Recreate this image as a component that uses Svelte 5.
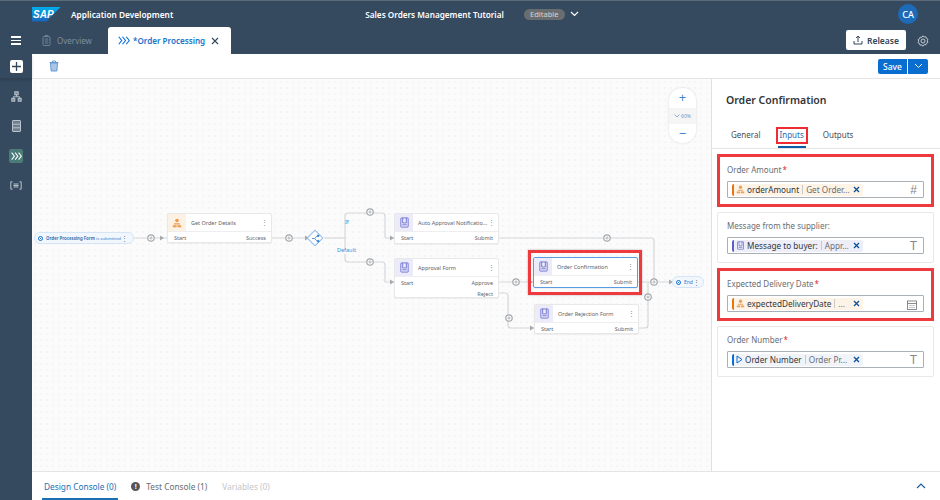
<script>
  const nodes = [
    { name: "Get Order Details", x: 167, y: 213, h: 30, kind: "person", outs: ["Success"] },
    { name: "Auto Approval Notificatio...", x: 394, y: 213, h: 31, kind: "form", outs: ["Submit"] },
    { name: "Approval Form", x: 394, y: 258, h: 40, kind: "form", outs: ["Approve", "Reject"] },
    { name: "Order Confirmation", x: 533, y: 257, h: 31, kind: "form", outs: ["Submit"], selected: true },
    { name: "Order Rejection Form", x: 534, y: 304, h: 30, kind: "form", outs: ["Submit"] }
  ];

  const plusDots = [[151, 238], [289, 238], [370, 212], [370, 262], [516, 282], [607, 238], [654, 282], [648, 297], [509, 318]];
  const arrows = [[160, 238], [305, 238], [390, 238], [390, 282], [529, 282], [530, 328], [669, 282]];

  const inputs = [
    { label: "Order Amount", req: true, hot: true, tone: "orange", icon: "person", main: "orderAmount", sub: "Get Order...", type: "#" },
    { label: "Message from the supplier:", tone: "violet", icon: "form", main: "Message to buyer:", sub: "Appr...", type: "T" },
    { label: "Expected Delivery Date", req: true, hot: true, tone: "orange", icon: "person", main: "expectedDeliveryDate", sub: "...", type: "cal" },
    { label: "Order Number", req: true, tone: "blue", icon: "play", main: "Order Number", sub: "Order Pr...", type: "T" }
  ];
</script>

{#snippet chevrons(size, color)}
  <svg width={size} height={size * 0.75} viewBox="0 0 16 12" fill="none" stroke={color} stroke-width="1.5">
    <path d="M1 1l4 5-4 5M6 1l4 5-4 5M11 1l4 5-4 5" />
  </svg>
{/snippet}

{#snippet formIcon(size, color)}
  <svg width={size} height={size} viewBox="0 0 12 12" fill="none" stroke={color} stroke-width="1">
    <rect x="2" y="1" width="8" height="10" rx=".5" />
    <path d="M4 1v5.500h4V1M3.500 8.500h5" />
  </svg>
{/snippet}

{#snippet personIcon(size, color)}
  <svg width={size} height={size} viewBox="0 0 12 12" fill={color}>
    <circle cx="6" cy="3" r="2.200" />
    <path d="M2.500 6.300h7v1.500h-7zM1 8.600h4.500V11H1zM6.500 8.600H11V11H6.500z" />
  </svg>
{/snippet}

<div class="page">
  <header class="shell">
    <div class="top">
      <div class="brand">
        <span class="logo">SAP</span>
        <span class="app">Application Development</span>
      </div>
      <div class="project">
        <span class="project-name">Sales Orders Management Tutorial</span>
        <span class="badge">Editable</span>
        <svg width="9" height="6" viewBox="0 0 9 6" fill="none" stroke="#fff" stroke-width="1.200"><path d="M1 1l3.500 3.500L8 1" /></svg>
      </div>
      <div class="account"><span class="avatar">CA</span></div>
    </div>
    <div class="tabs">
      <div class="burger"><i></i><i></i><i></i></div>
      <div class="tab">
        <svg width="9" height="11" viewBox="0 0 9 11" fill="none" stroke="#6f8296" stroke-width="1"><rect x="1" y="1.500" width="7" height="9" rx="1" /><path d="M3 1.500V.6h3v.9M2.800 4h3.400M2.800 6h3.400M2.800 8h3.400" /></svg>
        Overview
      </div>
      <div class="tab active">
        {@render chevrons(12, "#0a6ed1")}
        <span>*Order Processing</span>
        <svg width="8" height="8" viewBox="0 0 8 8" stroke="#32465a" stroke-width="1.100"><path d="M1 1l6 6M7 1L1 7" /></svg>
      </div>
      <button class="release">
        <svg width="10" height="10" viewBox="0 0 10 10" fill="none" stroke="#32465a" stroke-width="1"><path d="M1 6v3h8V6M5 7V1M3 3l2-2 2 2" /></svg>
        Release
      </button>
      <svg class="gear" width="12" height="12" viewBox="0 0 12 12" fill="none" stroke="#c3ccd5" stroke-width="1">
        <path d="M6 .8l1.200 1.200 1.700-.2.5 1.600 1.500.8-.6 1.600.6 1.600-1.500.8-.5 1.600-1.700-.2L6 11.200 4.800 10l-1.700.2-.5-1.600-1.500-.8.6-1.600-.6-1.600 1.500-.8.5-1.600 1.700.2z" />
        <circle cx="6" cy="6" r="2" />
      </svg>
    </div>
  </header>

  <div class="work">
    <nav class="rail">
      <div class="rail-add"><span class="add">
        <svg width="9" height="9" viewBox="0 0 9 9" stroke="#32465a" stroke-width="1.300"><path d="M4.500 0v9M0 4.500h9" /></svg>
      </span></div>
      <div class="rail-item">
        <svg width="11" height="11" viewBox="0 0 11 11" fill="#7e8c9a" stroke="#b8c2cc" stroke-width="1"><rect x="3.800" y=".8" width="3.400" height="3" /><rect x=".8" y="7.400" width="3" height="2.800" /><rect x="7.200" y="7.400" width="3" height="2.800" /><path d="M5.500 3.800v2H2.300v1.600M5.500 5.800h3.200v1.600" fill="none" /></svg>
      </div>
      <div class="rail-item">
        <svg width="9" height="12" viewBox="0 0 9 12" fill="#6f7f8f" stroke="#b8c2cc" stroke-width="1"><rect x=".5" y=".5" width="8" height="11" rx=".5" /><path d="M.5 4.200h8M.5 7.800h8" /></svg>
      </div>
      <div class="rail-item">
        <span class="rail-on">{@render chevrons(11, "#fff")}</span>
      </div>
      <div class="rail-item">
        <svg width="12" height="9" viewBox="0 0 12 9" fill="none" stroke="#b8c2cc" stroke-width="1"><path d="M2.500.8H.8v7.400h1.700M9.500.8h1.700v7.400H9.500M3.500 3h5M3.500 4.500h5M3.500 6h5" /></svg>
      </div>
    </nav>

    <div class="content">
      <div class="toolbar">
        <svg class="trash" width="10" height="12" viewBox="0 0 10 12" fill="#a9c6e6" stroke="#5b93cf" stroke-width=".9">
          <path d="M1.500 3h7l-.6 8H2.100z" />
          <path d="M.5 2.500h9M3.500 2.300V1h3v1.300" fill="none" />
        </svg>
        <div class="save">
          <span class="save-main">Save</span>
          <span class="save-more">
            <svg width="9" height="6" viewBox="0 0 9 6" fill="none" stroke="#fff" stroke-width="1"><path d="M1 1l3.500 3.500L8 1" /></svg>
          </span>
        </div>
      </div>

      <div class="middle">
        <div class="canvas">
          <svg class="wires" width="679" height="392" viewBox="32 79 679 392" fill="none" stroke="#d4d7da" stroke-width="1.200">
            <path d="M133 238H167M272 238H306" />
            <path d="M324 238H345" />
            <path d="M385 238V216q0-3-3-3H348q-3 0-3 3V259q0 3 3 3H382q3 0 3 3V282H394M385 238H394" />
            <path d="M498 238H651q3 0 3 3V282M498 282H533M498 293H505q3 0 3 3V325q0 3 3 3H534" />
            <path d="M637 282H672M638 328H645q3 0 3-3V282" />
            {#each arrows as [ax, ay]}
              <path d="M{ax} {ay - 2.500}l4 2.500-4 2.500z" fill="#a6aaae" stroke="none" />
            {/each}
            {#each plusDots as [px, py]}
              <circle cx={px} cy={py} r="3.200" fill="#fff" stroke="#a3a7ab" stroke-width="1.200" />
              <path d="M{px - 1.700} {py}h3.400M{px} {py - 1.700}v3.400" stroke="#a3a7ab" stroke-width=".8" />
            {/each}
          </svg>

          <div class="pill start">
            <span class="radio"></span>
            <b>Order Processing Form</b>&nbsp;is submitted
            <span class="pill-dots">⋮</span>
          </div>

          <span class="gate">
            <svg width="9" height="9" viewBox="0 0 10 10" fill="none" stroke="#2f7fd0" stroke-width=".9"><path d="M1 5h3l3-3M4 5l3 3" /><circle cx="8" cy="2" r="1" fill="#2f7fd0" /><circle cx="8" cy="8" r="1" fill="#2f7fd0" /></svg>
          </span>
          <span class="branch if">If</span>
          <span class="branch default">Default</span>

          {#each nodes as n}
            <div class="node" class:selected={n.selected} style="left: {n.x - 32}px; top: {n.y - 79}px; height: {n.h}px;">
              <div class="node-head">
                <span class="node-icon {n.kind}">
                  {#if n.kind === "person"}
                    {@render personIcon(10, "#ec9a4d")}
                  {:else}
                    {@render formIcon(11, "#6f71cf")}
                  {/if}
                </span>
                <span class="node-name">{n.name}</span>
                <span class="node-dots">⋮</span>
              </div>
              <div class="node-ports">
                <span>Start</span>
                <span class="outs">
                  {#each n.outs as o}<span>{o}</span>{/each}
                </span>
              </div>
            </div>
          {/each}

          <div class="hot-node"></div>

          <div class="pill end">
            <span class="radio"></span>
            End
            <span class="pill-dots">⋮</span>
          </div>

          <div class="zoom">
            <span class="zoom-btn">+</span>
            <span class="zoom-val">
              <svg width="6" height="4" viewBox="0 0 6 4" fill="none" stroke="#6b9bd0" stroke-width=".8"><path d="M.5.500L3 3 5.500.500" /></svg>
              60%
            </span>
            <span class="zoom-btn">−</span>
          </div>
        </div>

        <aside class="panel">
          <h2>Order Confirmation</h2>
          <div class="panel-tabs">
            <span>General</span>
            <span class="on">Inputs</span>
            <span>Outputs</span>
          </div>
          <div class="cards">
            {#each inputs as f}
              <div class="card" class:hot={f.hot}>
                <div class="field-label">{f.label}{#if f.req}<span class="req">*</span>{/if}</div>
                <div class="field">
                  <span class="token {f.tone}">
                    {#if f.icon === "person"}
                      {@render personIcon(9, "#e8a25f")}
                    {:else if f.icon === "form"}
                      {@render formIcon(9, "#6f71cf")}
                    {:else}
                      <svg width="7" height="9" viewBox="0 0 7 9" fill="none" stroke="#0a6ed1" stroke-width="1"><path d="M1 1l5 3.500-5 3.500z" /></svg>
                    {/if}
                    <span class="main">{f.main}</span>
                    <span class="sub">{f.sub}</span>
                    <svg class="x" width="7" height="7" viewBox="0 0 7 7" stroke="#0a4f9c" stroke-width="1.300"><path d="M1 1l5 5M6 1L1 6" /></svg>
                  </span>
                  <span class="type">
                    {#if f.type === "cal"}
                      <svg width="10" height="10" viewBox="0 0 10 10" fill="none" stroke="#6a6d70" stroke-width=".8"><rect x=".5" y="1" width="9" height="8.500" /><path d="M.5 3.500h9M2.500 5.500h1M4.500 5.500h1M6.500 5.500h1M2.500 7.500h1M4.500 7.500h1M6.500 7.500h1" /></svg>
                    {:else}
                      {f.type}
                    {/if}
                  </span>
                </div>
              </div>
            {/each}
          </div>
        </aside>
      </div>

      <footer class="console">
        <span class="con on">Design Console (0)</span>
        <span class="con">
          <span class="alert">!</span>
          Test Console (1)
        </span>
        <span class="con off">Variables (0)</span>
        <svg class="up" width="10" height="6" viewBox="0 0 10 6" fill="none" stroke="#1a5c9e" stroke-width="1.200"><path d="M1 5l4-4 4 4" /></svg>
      </footer>
    </div>
  </div>
</div>

<style>
  :global(body) {
    margin: 0;
    font-family: "Noto Sans", "Open Sans", sans-serif;
    color: #32363a;
  }

  .page {
    width: 940px;
    height: 500px;
    display: flex;
    flex-direction: column;
    overflow: hidden;
  }

  /* header */
  .shell {
    background: #354a5f;
    border-top: 1px solid #5b6b7b;
    height: 53px;
    flex: none;
  }
  .top {
    height: 26px;
    display: grid;
    grid-template-columns: 1fr auto 1fr;
    align-items: center;
  }
  .brand {
    display: flex;
    align-items: center;
    gap: 10px;
    padding-left: 32px;
  }
  .logo {
    width: 29px;
    height: 15px;
    background: linear-gradient(180deg, #00aeef, #1b62b8);
    clip-path: polygon(0 0, 100% 0, 50% 100%, 0 100%);
    color: #fff;
    font: italic bold 10px/15px "Liberation Sans", sans-serif;
    padding-left: 1px;
    box-sizing: border-box;
  }
  .app {
    color: #fff;
    font-size: 8.300px;
    font-weight: 600;
  }
  .project {
    display: flex;
    align-items: center;
    color: #fff;
    font-size: 8.200px;
    font-weight: 600;
    padding-left: 4px;
  }
  .badge {
    margin-left: 20px;
    margin-right: 5px;
    background: #6a6d70;
    color: #d5d7d9;
    font-size: 7.500px;
    font-weight: 400;
    height: 11px;
    line-height: 11px;
    width: 41px;
    text-align: center;
    border-radius: 6px;
  }
  .account {
    display: flex;
    justify-content: flex-end;
    padding-right: 22px;
  }
  .avatar {
    width: 20px;
    height: 20px;
    border-radius: 50%;
    background: #1d6bb8;
    color: #fff;
    font-size: 9px;
    font-weight: 500;
    display: flex;
    align-items: center;
    justify-content: center;
  }
  .tabs {
    height: 27px;
    display: flex;
    align-items: stretch;
    font-size: 8px;
  }
  .burger {
    width: 32px;
    display: flex;
    flex-direction: column;
    justify-content: center;
    align-items: center;
    gap: 2px;
  }
  .burger i {
    width: 10px;
    height: 1.500px;
    background: #fff;
  }
  .tab {
    width: 76px;
    display: flex;
    align-items: center;
    gap: 6px;
    padding-left: 10px;
    box-sizing: border-box;
    color: #7d8e9f;
  }
  .tab.active {
    width: 123px;
    background: #fff;
    border-radius: 3px 3px 0 0;
    color: #1a73c9;
    font-weight: 600;
    font-size: 8.100px;
    gap: 4px;
  }
  .tab.active span {
    width: 74px;
    margin-left: -1px;
    white-space: nowrap;
  }
  .release {
    margin: 3px 0 4px auto;
    width: 60px;
    height: 20px;
    background: #fff;
    border: 0;
    border-radius: 2px;
    display: flex;
    align-items: center;
    justify-content: center;
    gap: 4px;
    font: 600 8.500px "Noto Sans", sans-serif;
    color: #32465a;
    padding: 0;
  }
  .gear {
    margin: 8px 11px 0 11px;
  }

  /* left rail */
  .work {
    flex: 1;
    display: flex;
    min-height: 0;
  }
  .rail {
    width: 32px;
    flex: none;
    background: #354a5f;
    display: flex;
    flex-direction: column;
  }
  .rail-add {
    height: 24px;
    display: flex;
    align-items: center;
    justify-content: center;
    box-shadow: 0 2px 3px rgba(0, 0, 0, 0.15);
    margin-bottom: 4px;
  }
  .add {
    width: 13px;
    height: 13px;
    background: #fff;
    border-radius: 2px;
    display: flex;
    align-items: center;
    justify-content: center;
  }
  .rail-item {
    height: 29.500px;
    display: flex;
    align-items: center;
    justify-content: center;
  }
  .rail-on {
    width: 14px;
    height: 14px;
    border-radius: 2px;
    background: #4a7c78;
    display: flex;
    align-items: center;
    justify-content: center;
  }

  /* main */
  .content {
    flex: 1;
    display: flex;
    flex-direction: column;
    min-width: 0;
  }
  .toolbar {
    height: 24px;
    flex: none;
    display: flex;
    align-items: center;
    justify-content: space-between;
    padding: 0 12px 0 17px;
    border-bottom: 1px solid #e4e4e4;
  }
  .save {
    display: flex;
    height: 15px;
    gap: 1px;
    color: #fff;
    font-size: 8.500px;
    font-weight: 500;
  }
  .save-main,
  .save-more {
    background: #0a6ed1;
    display: flex;
    align-items: center;
    justify-content: center;
  }
  .save-main {
    width: 29px;
    border-radius: 2px 0 0 2px;
  }
  .save-more {
    width: 20px;
    border-radius: 0 2px 2px 0;
  }
  .middle {
    flex: 1;
    display: flex;
    min-height: 0;
  }

  /* canvas */
  .canvas {
    position: relative;
    flex: 1;
    background-color: #fbfbfb;
    background-image: radial-gradient(#ededed 0.6px, transparent 0.8px);
    background-size: 6px 6px;
    font-size: 5.500px;
    overflow: hidden;
  }
  .wires {
    position: absolute;
    left: 0;
    top: 0;
  }
  .pill {
    position: absolute;
    height: 12px;
    box-sizing: border-box;
    display: flex;
    align-items: center;
    background: #f1f7fd;
    border: 1px solid #d5e5f5;
    border-radius: 6px;
    color: #2f7fd0;
    font-size: 4.300px;
    padding: 0 3px;
    white-space: nowrap;
  }
  .pill b {
    font-weight: 700;
    color: #3a76b5;
  }
  .start {
    left: 2px;
    top: 153px;
    width: 100px;
  }
  .start .pill-dots {
    margin-right: 3px;
  }
  .end {
    left: 640px;
    top: 197px;
    width: 32px;
    font-size: 5px;
  }
  .radio {
    width: 5px;
    height: 5px;
    border: 0.8px solid #0a6ed1;
    border-radius: 50%;
    box-sizing: border-box;
    margin-right: 3px;
    background: radial-gradient(#0a6ed1 40%, #fff 45%);
    flex: none;
  }
  .pill-dots {
    margin-left: auto;
    color: #6a6d70;
    font-size: 7px;
  }
  .gate {
    position: absolute;
    left: 274px;
    top: 150px;
    width: 18px;
    height: 18px;
    display: flex;
    align-items: center;
    justify-content: center;
  }
  .gate::before {
    content: "";
    position: absolute;
    inset: 3px;
    background: #fff;
    border: 1px solid #8dbcec;
    border-radius: 1px;
    transform: rotate(45deg);
  }
  .gate svg {
    position: relative;
  }
  .branch {
    position: absolute;
    color: #3c8ad8;
    font-size: 5.500px;
    line-height: 1;
  }
  .if {
    left: 313px;
    top: 141px;
  }
  .default {
    left: 305px;
    top: 169px;
    background: #fbfbfb;
  }
  .node {
    position: absolute;
    width: 105px;
    box-sizing: border-box;
    background: #fff;
    border: 1px solid #e8e8e8;
    border-radius: 2px;
    box-shadow: 0 1px 1px rgba(0, 0, 0, 0.05);
    color: #5f6367;
  }
  .node.selected {
    border-color: #5a9ce0;
  }
  .node-head {
    height: 18px;
    display: flex;
    align-items: center;
    border-bottom: 1px solid #eee;
    box-sizing: border-box;
  }
  .node-icon {
    width: 18px;
    height: 100%;
    display: flex;
    align-items: center;
    justify-content: center;
    background: #ecebfa;
  }
  .node-icon.person {
    background: #fdf1e4;
  }
  .node-name {
    margin-left: 5px;
    flex: 1;
    white-space: nowrap;
  }
  .node-dots {
    margin-right: 3px;
    font-size: 7px;
    color: #80868b;
  }
  .node-ports {
    display: flex;
    justify-content: space-between;
    padding: 1px 5px 0 6px;
    line-height: 11px;
  }
  .outs {
    display: flex;
    flex-direction: column;
    align-items: flex-end;
  }
  .hot-node {
    position: absolute;
    left: 496px;
    top: 171px;
    width: 114px;
    height: 45px;
    box-sizing: border-box;
    border: 3px solid #ee3a3f;
    box-shadow: 0 0 2px rgba(0, 0, 0, 0.3);
  }
  .zoom {
    position: absolute;
    left: 637px;
    top: 9px;
    width: 27px;
    height: 55px;
    background: #fff;
    border-radius: 13px;
    box-shadow: 0 0 3px rgba(0, 0, 0, 0.12);
    display: flex;
    flex-direction: column;
    color: #3f87d4;
  }
  .zoom-btn {
    flex: 1;
    display: flex;
    align-items: center;
    justify-content: center;
    font-size: 13px;
    line-height: 1;
  }
  .zoom-val {
    height: 16px;
    flex: none;
    background: #f5f5f5;
    display: flex;
    align-items: center;
    justify-content: center;
    gap: 1px;
    font-size: 5px;
    color: #6b9bd0;
  }

  /* right panel */
  .panel {
    width: 229px;
    flex: none;
    box-sizing: border-box;
    border-left: 1px solid #e0e0e0;
    background: #fff;
    display: flex;
    flex-direction: column;
  }
  h2 {
    margin: 14px 0 0 14px;
    font-size: 10.500px;
    line-height: 15px;
    font-weight: 600;
    color: #32363a;
  }
  .panel-tabs {
    margin-top: 19px;
    height: 22px;
    box-sizing: border-box;
    border-bottom: 1px solid #e5e5e5;
    display: flex;
    padding-left: 19px;
    gap: 19px;
    font-size: 8px;
    color: #4a4e52;
    line-height: 15px;
  }
  .panel-tabs .on {
    position: relative;
    color: #2a6db5;
    height: 21px;
    border-bottom: 2px solid #0d5aa7;
    box-sizing: border-box;
    padding: 0 2px;
    margin: 0 -2px;
  }
  .panel-tabs .on::before {
    content: "";
    position: absolute;
    left: -2px;
    right: -2px;
    top: 0;
    height: 17px;
    border: 2px solid #ee2c32;
    box-sizing: border-box;
  }
  .cards {
    display: flex;
    flex-direction: column;
    gap: 5px;
    padding: 5px 6px 0 5px;
  }
  .card {
    height: 51px;
    box-sizing: border-box;
    border: 1px solid #e8e8e8;
    border-radius: 2px;
    padding: 7px 9px 0 9px;
  }
  .card.hot {
    border: 3px solid #ee3a3f;
    padding: 7px 7px 0 7px;
    border-radius: 0;
    height: 53px;
  }
  .field-label {
    font-size: 8px;
    line-height: 12px;
    color: #6a6d70;
    white-space: nowrap;
  }
  .req {
    color: #e0262b;
    margin-left: 1px;
  }
  .field {
    margin-top: 5px;
    height: 17px;
    box-sizing: border-box;
    border: 1px solid #a9b0b6;
    border-radius: 1px;
    display: flex;
    align-items: center;
    padding-left: 4px;
    position: relative;
  }
  .token {
    width: 131px;
    height: 12px;
    box-sizing: border-box;
    border-left: 2px solid;
    border-radius: 2px;
    display: flex;
    align-items: center;
    gap: 2px;
    padding-left: 2px;
    font-size: 8.200px;
    white-space: nowrap;
    overflow: hidden;
  }
  .token.orange {
    border-color: #e9730c;
    background: #fdf3e7;
  }
  .token.violet {
    border-color: #5d5fc7;
    background: #eeeef9;
  }
  .token.blue {
    border-color: #0a6ed1;
    background: #f0f3f8;
  }
  .main {
    color: #32363a;
  }
  .sub {
    color: #6a6d70;
    border-left: 1px solid #c9c9c9;
    padding-left: 3px;
    margin-left: 1px;
    line-height: 9px;
  }
  .x {
    margin-left: auto;
    margin-right: 3px;
    flex: none;
  }
  .type {
    position: absolute;
    right: 6px;
    top: 1px;
    font-size: 12px;
    line-height: 14px;
    color: #85888b;
    font-family: "Liberation Sans", sans-serif;
  }
  .type svg {
    display: block;
    margin-top: 3px;
  }

  /* console */
  .console {
    height: 28px;
    flex: none;
    border-top: 1px solid #e4e4e4;
    display: flex;
    align-items: center;
    font-size: 8.300px;
    color: #6a6d70;
    padding-left: 10px;
    position: relative;
  }
  .con {
    display: flex;
    align-items: center;
    gap: 6px;
    height: 100%;
    padding: 0 2px;
    margin-right: 11px;
    box-sizing: border-box;
  }
  .con.on {
    color: #1a6fb5;
    border-bottom: 2px solid #1a6fb5;
    padding-top: 2px;
  }
  .con.off {
    color: #c4c6c8;
  }
  .alert {
    width: 9px;
    height: 9px;
    border-radius: 50%;
    background: #51565b;
    color: #fff;
    font-size: 7px;
    font-weight: 700;
    display: flex;
    align-items: center;
    justify-content: center;
  }
  .up {
    margin-left: auto;
    margin-right: 14px;
  }
</style>
